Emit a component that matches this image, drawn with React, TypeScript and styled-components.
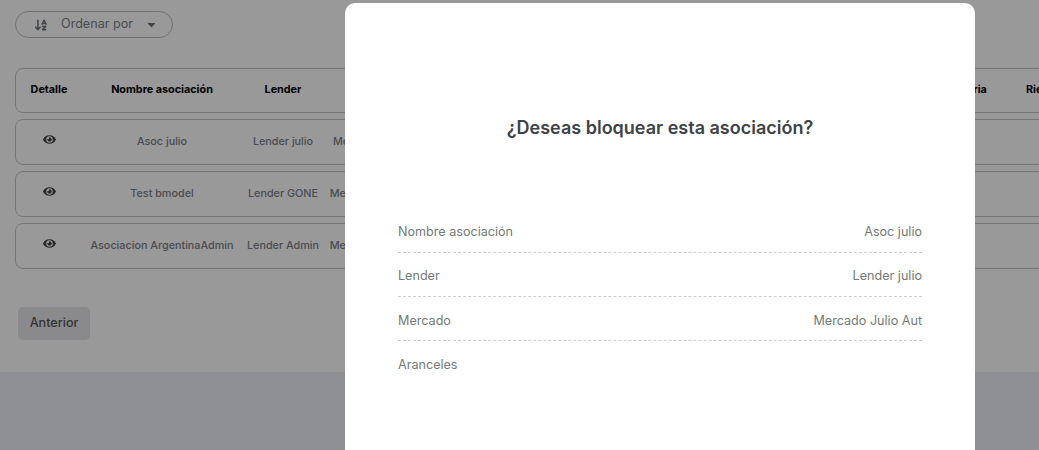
import React from "react";
import styled, { createGlobalStyle } from "styled-components";
import { FaCaretDown, FaEye } from "react-icons/fa";
import { FaArrowDownAZ } from "react-icons/fa6";

const GlobalStyle = createGlobalStyle`
  html, body {
    margin: 0;
    height: 100%;
    overflow: hidden;
    background: #eef0f6;
    font-family: Inter, "Liberation Sans", sans-serif;
  }
`;

const Page = styled.div`
  height: 372px;
  background: #fff;
  padding: 11px 0 0 15px;
  box-sizing: border-box;
  overflow: hidden;
`;

const SortButton = styled.button`
  display: flex;
  align-items: center;
  width: 158px;
  height: 27px;
  padding: 0 0 0 18px;
  box-sizing: border-box;
  background: transparent;
  border: 1px solid #bcbcbc;
  border-radius: 14px;
  font: 400 12.6px Inter, sans-serif;
  color: #6f737b;
`;

const SortLabel = styled.span`
  margin: 0 12px 0 13px;
  padding-bottom: 3px;
  color: #7b7f87;
`;

const Table = styled.div`
  width: 1260px;
  margin-top: 30px;
  display: flex;
  flex-direction: column;
  gap: 6px;
`;

const Row = styled.div<{ $header?: boolean }>`
  display: grid;
  grid-template-columns: 66px 160px 82px 112px 480px 90px 76px 1fr;
  height: ${(p) => (p.$header ? 45 : 46)}px;
  padding-bottom: ${(p) => (p.$header ? 3 : 2)}px;
  box-sizing: border-box;
  border: 1px solid #c4c4c4;
  border-radius: 8px;
  font-size: 10.8px;
  font-weight: ${(p) => (p.$header ? 700 : 500)};
  color: ${(p) => (p.$header ? "#000" : "#7c808c")};
`;

const Cell = styled.div`
  display: flex;
  justify-content: center;
  align-items: center;
  white-space: nowrap;
`;

const EyeCell = styled(Cell)`
  align-items: flex-start;
  padding-top: 13px;
  color: #444;
  font-size: 13px;
`;

const BackButton = styled.button`
  display: block;
  width: 72px;
  height: 33px;
  margin: 38px 0 0 3px;
  padding: 0 0 2px;
  background: #e6e7e9;
  border: 0;
  border-radius: 5px;
  font: 500 12.6px Inter, sans-serif;
  color: #555;
`;

const Overlay = styled.div`
  position: fixed;
  inset: 0;
  background: rgba(0, 0, 0, 0.4);
`;

const Modal = styled.div`
  position: absolute;
  left: 345px;
  top: 3px;
  width: 630px;
  height: 520px;
  padding: 0 53px;
  box-sizing: border-box;
  background: #fff;
  border-radius: 10px;
`;

const Title = styled.h2`
  margin: 0;
  padding-top: 114px;
  height: 205.8px;
  box-sizing: border-box;
  text-align: center;
  font-size: 18px;
  line-height: 22px;
  font-weight: 600;
  color: #3f4247;
`;

const InfoRow = styled.div<{ $last?: boolean }>`
  display: flex;
  justify-content: space-between;
  height: 44.2px;
  padding-top: 15.4px;
  box-sizing: border-box;
  font-size: 12.6px;
  line-height: 16px;
  color: #747b78;
  border-bottom: ${(p) => (p.$last ? "0" : "1px dashed #cfcfcf")};
`;

const columns = [
  "Detalle",
  "Nombre asociación",
  "Lender",
  "Mercado",
  "Aranceles",
  "Categoria",
  "Riesgo",
  "",
];

const rows = [
  ["Asoc julio", "Lender julio", "Mercado Julio Aut"],
  ["Test bmodel", "Lender GONE", "Mercado Julio Auto"],
  ["Asociacion ArgentinaAdmin", "Lender Admin", "Mercado Julio Auto"],
];

const details = [
  ["Nombre asociación", "Asoc julio"],
  ["Lender", "Lender julio"],
  ["Mercado", "Mercado Julio Aut"],
  ["Aranceles", ""],
];

export default function App() {
  return (
    <>
      <GlobalStyle />
      <Page>
        <SortButton type="button">
          <FaArrowDownAZ size={14} />
          <SortLabel>Ordenar por</SortLabel>
          <FaCaretDown size={13} />
        </SortButton>
        <Table>
          <Row $header>
            {columns.map((c) => (
              <Cell key={c}>{c}</Cell>
            ))}
          </Row>
          {rows.map((r) => (
            <Row key={r[0]}>
              <EyeCell>
                <FaEye />
              </EyeCell>
              {r.map((t) => (
                <Cell key={t}>{t}</Cell>
              ))}
            </Row>
          ))}
        </Table>
        <BackButton type="button">Anterior</BackButton>
      </Page>
      <Overlay>
        <Modal>
          <Title>¿Deseas bloquear esta asociación?</Title>
          {details.map(([k, v], i) => (
            <InfoRow key={k} $last={i === details.length - 1}>
              <span>{k}</span>
              <span>{v}</span>
            </InfoRow>
          ))}
        </Modal>
      </Overlay>
    </>
  );
}
